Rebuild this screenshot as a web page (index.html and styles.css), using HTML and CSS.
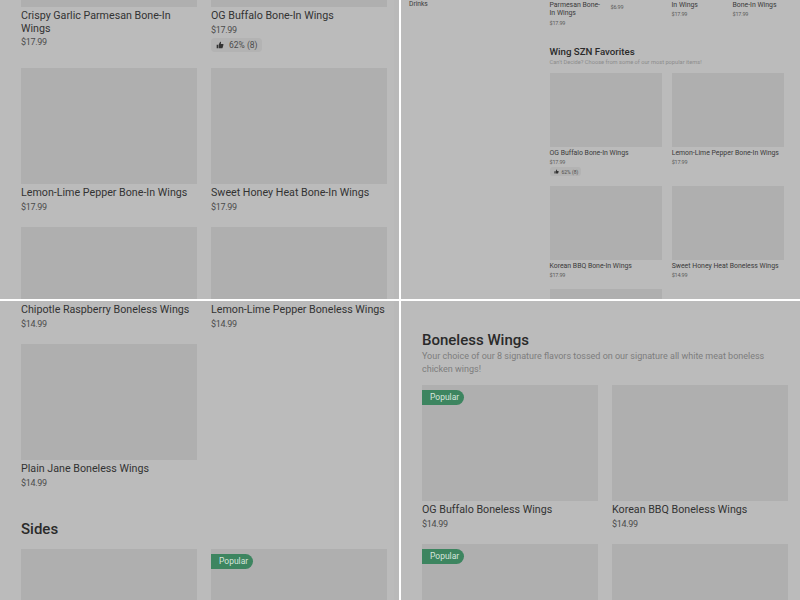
FILE: index.html
```html
<!DOCTYPE html>
<html>
<head>
    <link rel="stylesheet" href="styles.css">
</head>
<body>
    <div class="screens">
        <!-- top left -->
        <div class="pane pane-left">
            <div class="content shift-a">
                <div class="grid">
                    <div class="item">
                        <div class="thumb"></div>
                        <div class="name">Crispy Garlic Parmesan Bone-In Wings</div>
                        <div class="price">$17.99</div>
                    </div>
                    <div class="item">
                        <div class="thumb"></div>
                        <div class="name">OG Buffalo Bone-In Wings</div>
                        <div class="price">$17.99</div>
                        <div class="rating">
                            <svg class="thumb-up" viewBox="0 0 12 12"><path d="M1 5.5h2.2V11H1zM4 5.5 6.2 1c1 0 1.5.7 1.3 1.7L7.2 4.5h3.1c.7 0 1.1.6.9 1.2l-1.3 4.5c-.1.5-.5.8-1 .8H4z"/></svg>
                            <span>62% (8)</span>
                        </div>
                    </div>
                    <div class="item">
                        <div class="thumb"></div>
                        <div class="name">Lemon-Lime Pepper Bone-In Wings</div>
                        <div class="price">$17.99</div>
                    </div>
                    <div class="item">
                        <div class="thumb"></div>
                        <div class="name">Sweet Honey Heat Bone-In Wings</div>
                        <div class="price">$17.99</div>
                    </div>
                    <div class="item">
                        <div class="thumb"></div>
                    </div>
                    <div class="item">
                        <div class="thumb"></div>
                    </div>
                </div>
            </div>
        </div>

        <!-- top right, the small desktop view -->
        <div class="pane desktop">
            <div class="sidebar">Drinks</div>
            <div class="main">
                <div class="row-four">
                    <div class="mini">
                        <div class="mini-name">Crispy Garlic Parmesan Bone-In Wings</div>
                        <div class="mini-price">$17.99</div>
                    </div>
                    <div class="mini mini-short">
                        <div class="mini-price">$6.99</div>
                    </div>
                    <div class="mini mini-two">
                        <div class="mini-name">In Wings</div>
                        <div class="mini-price">$17.99</div>
                    </div>
                    <div class="mini mini-two">
                        <div class="mini-name">Bone-In Wings</div>
                        <div class="mini-price">$17.99</div>
                    </div>
                </div>
                <h3>Wing SZN Favorites</h3>
                <p class="mini-desc">Can't Decide? Choose from some of our most popular items!</p>
                <div class="mini-grid">
                    <div>
                        <div class="mini-thumb"></div>
                        <div class="mini-name">OG Buffalo Bone-In Wings</div>
                        <div class="mini-price">$17.99</div>
                        <div class="mini-rating">
                            <svg class="thumb-up-small" viewBox="0 0 12 12"><path d="M1 5.5h2.2V11H1zM4 5.5 6.2 1c1 0 1.5.7 1.3 1.7L7.2 4.5h3.1c.7 0 1.1.6.9 1.2l-1.3 4.5c-.1.5-.5.8-1 .8H4z"/></svg>
                            <span>62% (8)</span>
                        </div>
                    </div>
                    <div>
                        <div class="mini-thumb"></div>
                        <div class="mini-name">Lemon-Lime Pepper Bone-In Wings</div>
                        <div class="mini-price">$17.99</div>
                    </div>
                    <div>
                        <div class="mini-thumb"></div>
                        <div class="mini-name">Korean BBQ Bone-In Wings</div>
                        <div class="mini-price">$17.99</div>
                    </div>
                    <div>
                        <div class="mini-thumb"></div>
                        <div class="mini-name">Sweet Honey Heat Boneless Wings</div>
                        <div class="mini-price">$14.99</div>
                    </div>
                    <div>
                        <div class="mini-thumb"></div>
                    </div>
                </div>
            </div>
        </div>

        <!-- bottom left -->
        <div class="pane pane-left">
            <div class="content">
                <div class="grid">
                    <div class="item">
                        <div class="name">Chipotle Raspberry Boneless Wings</div>
                        <div class="price">$14.99</div>
                    </div>
                    <div class="item">
                        <div class="name">Lemon-Lime Pepper Boneless Wings</div>
                        <div class="price">$14.99</div>
                    </div>
                    <div class="item">
                        <div class="thumb"></div>
                        <div class="name">Plain Jane Boneless Wings</div>
                        <div class="price">$14.99</div>
                    </div>
                </div>
                <h2 class="sides">Sides</h2>
                <div class="grid">
                    <div class="item">
                        <div class="thumb"></div>
                    </div>
                    <div class="item">
                        <div class="thumb"><span class="badge">Popular</span></div>
                    </div>
                </div>
            </div>
        </div>

        <!-- bottom right -->
        <div class="pane">
            <div class="content shift-d">
                <h2>Boneless Wings</h2>
                <p class="desc">Your choice of our 8 signature flavors tossed on our signature all white meat boneless chicken wings!</p>
                <div class="grid">
                    <div class="item">
                        <div class="thumb"><span class="badge">Popular</span></div>
                        <div class="name">OG Buffalo Boneless Wings</div>
                        <div class="price">$14.99</div>
                    </div>
                    <div class="item">
                        <div class="thumb"></div>
                        <div class="name">Korean BBQ Boneless Wings</div>
                        <div class="price">$14.99</div>
                    </div>
                    <div class="item">
                        <div class="thumb"><span class="badge">Popular</span></div>
                    </div>
                    <div class="item">
                        <div class="thumb"></div>
                    </div>
                </div>
            </div>
        </div>
    </div>
</body>
</html>
```

FILE: styles.css
```css
html, body {
    margin: 0;
    height: 100%;
    overflow: hidden;
}
body {
    background-color: #fff;
    font-family: Roboto, "Liberation Sans", sans-serif;
    color: #333;
}
.screens {
    display: grid;
    grid-template-columns: 399px 399px;
    grid-template-rows: 299px 299px;
    gap: 2px;
    width: 800px;
    height: 600px;
}
.pane {
    background-color: #bbb;
    overflow: hidden;
}
.pane-left {
    border-right: 5px solid #b9b9b9;
}
.content {
    padding: 0 0 0 21px;
}
.shift-a {
    margin-top: -109px;
}
.shift-d {
    padding-top: 29px;
}
.grid {
    display: grid;
    grid-template-columns: 176px 176px;
    column-gap: 14px;
    row-gap: 13.5px;
}
.thumb {
    position: relative;
    height: 116px;
    background-color: #afafaf;
}
.name {
    margin-top: 3px;
    font-size: 10.7px;
    line-height: 12.5px;
    color: #333;
}
.price {
    font-size: 9px;
    line-height: 14px;
    letter-spacing: -0.3px;
    color: #4c4c4c;
}
.rating {
    display: flex;
    align-items: center;
    gap: 5px;
    width: fit-content;
    margin: 1.5px 0 2.5px;
    padding: 0 4px 0 5px;
    height: 14px;
    border-radius: 4px;
    background-color: #b3b3b3;
    font-size: 8.5px;
    color: #4c4c4c;
}
.thumb-up {
    width: 8px;
    height: 8px;
    fill: #333;
}
.badge {
    position: absolute;
    top: 5px;
    left: 0;
    width: 42px;
    height: 15px;
    border-radius: 0 8px 8px 0;
    background-color: #3d8560;
    color: #d6e4dc;
    font-size: 8.5px;
    line-height: 15px;
    text-indent: 8px;
}
h2 {
    margin: 0;
    font-size: 15px;
    line-height: 20px;
    font-weight: 500;
    color: #2a2a2a;
}
.sides {
    margin: 29px 0 10px;
}
.desc {
    margin: 0 0 9px;
    width: 345px;
    font-size: 9px;
    line-height: 13px;
    color: #7d7d7d;
}
.desktop {
    display: flex;
    padding-left: 8px;
}
.sidebar {
    width: 140.5px;
    flex-shrink: 0;
    font-size: 6.7px;
    line-height: 8px;
    color: #3a3a3a;
}
.main {
    width: 240px;
}
.row-four {
    display: grid;
    grid-template-columns: 52px 52px 52px 52px;
    column-gap: 9px;
    margin-top: -8px;
}
.mini-short {
    padding-top: 9.5px;
}
.mini-two {
    padding-top: 8.5px;
}
.mini-name {
    padding-top: 1.5px;
    font-size: 6.9px;
    line-height: 8.5px;
    color: #3a3a3a;
}
.mini .mini-name {
    padding-top: 0;
}
.mini-price {
    margin-top: 0.5px;
    font-size: 5.5px;
    line-height: 8px;
    letter-spacing: -0.2px;
    color: #5a5a5a;
}
.mini .mini-price {
    margin-top: 1px;
}
h3 {
    margin: 19.5px 0 0;
    font-size: 9.7px;
    line-height: 12px;
    font-weight: 500;
    color: #2a2a2a;
}
.mini-desc {
    margin: 0 0 7px;
    font-size: 5.7px;
    line-height: 8px;
    color: #8c8c8c;
}
.mini-grid {
    display: grid;
    grid-template-columns: 112.4px 112.4px;
    column-gap: 9.8px;
    row-gap: 10px;
}
.mini-thumb {
    height: 74px;
    background-color: #afafaf;
}
.mini-rating {
    display: flex;
    align-items: center;
    gap: 3px;
    width: fit-content;
    margin-top: 1.5px;
    padding: 0 3px 0 4px;
    height: 9px;
    border-radius: 3px;
    background-color: #b3b3b3;
    font-size: 5px;
    color: #4c4c4c;
}
.thumb-up-small {
    width: 5px;
    height: 5px;
    fill: #333;
}
```
